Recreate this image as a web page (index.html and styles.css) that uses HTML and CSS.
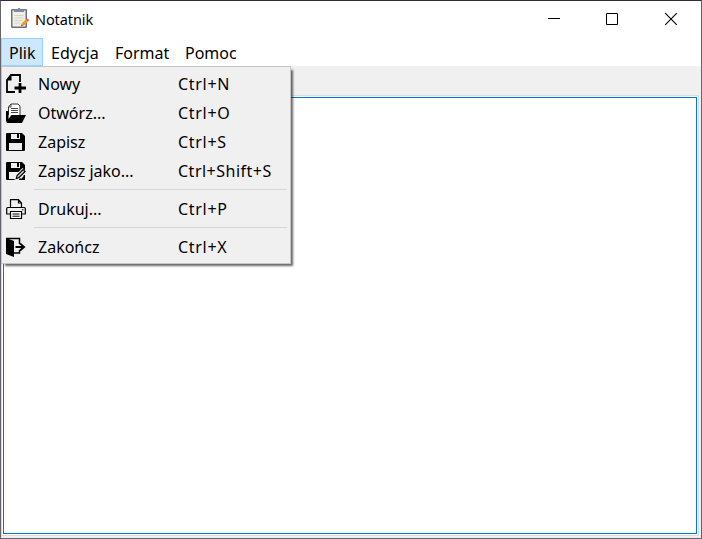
FILE: index.html
```html
<!DOCTYPE html>
<html lang="pl">
<head>
<meta charset="utf-8">
<title>Notatnik</title>
<link rel="stylesheet" href="styles.css">
</head>
<body>
<div class="window">
  <header class="titlebar">
    <svg class="app-icon" width="20" height="21" viewBox="0 0 20 21">
      <rect x="1" y="1" width="16" height="19" rx="1" fill="#66728f"/>
      <rect x="2.500" y="2.500" width="13" height="16" fill="#f4f0dd"/>
      <path d="M4 1.500h3.500L8 0h2l.5 1.500H14V4H4z" fill="#7e8bab"/>
      <path d="M4.500 7.500h9M4.500 10h9M4.500 12.500h8M4.500 15h6" stroke="#d3d3cb"/>
      <path d="M11 18l1-3 4-3.500 2 2-4 4z" fill="#f09a32"/>
      <path d="M16 11.500l1.500-1 1.800 1.800L18 13.500z" fill="#db6550"/>
      <path d="M11 18.200l.7-1.700 1 1z" fill="#5c4b38"/>
    </svg>
    <h1 class="title">Notatnik</h1>
    <div class="controls">
      <svg width="58" height="36" viewBox="0 0 58 36"><path d="M18 17.500h12" stroke="#000"/></svg>
      <svg width="58" height="36" viewBox="0 0 58 36"><path d="M18.500 12.500h11v11h-11z" fill="none" stroke="#000"/></svg>
      <svg width="58" height="36" viewBox="0 0 58 36"><path d="M19.200 12.200l11.600 11.600M30.800 12.200L19.200 23.800" stroke="#000" stroke-width="1.100"/></svg>
    </div>
  </header>
  <nav class="menubar">
    <span class="tab tab-open">Plik</span>
    <span class="tab edycja">Edycja</span>
    <span class="tab format">Format</span>
    <span class="tab pomoc">Pomoc</span>
  </nav>
  <div class="toolbar"></div>
  <main class="client"><div class="editor"></div></main>

  <div class="menu">
    <div class="item">
      <svg class="icon" width="20" height="20" viewBox="0 0 20 20"><path d="M9 18H1V6l4-5h9v7" fill="none" stroke="#000" stroke-width="1.800"/><path d="M1 6l4.500-5v5.500H1z"/><path d="M14 9v10M8.500 14H20" stroke="#000" stroke-width="2.800"/></svg>
      <span class="label">Nowy</span><span class="key">Ctrl+N</span>
    </div>
    <div class="item">
      <svg class="icon" width="20" height="20" viewBox="0 0 20 20"><path d="M2.500 12V4L5 1h7l2 2v9" fill="#fff" stroke="#333"/><path d="M5 1v3H2.500M5 5.500h7M5 7.500h7M5 9.500h7" fill="none" stroke="#444"/><path d="M0 8h2.500v8l3-4H20l-4 8H1L0 18z"/></svg>
      <span class="label">Otwórz...</span><span class="key">Ctrl+O</span>
    </div>
    <div class="item">
      <svg class="icon" width="20" height="20" viewBox="0 0 20 20"><path d="M0 2Q0 1 1 1h15l3 3v14q0 1-1 1H1q-1 0-1-1z"/><path d="M5 2h9v5H5zM3 11h13v7H3z" fill="#f0f0f0"/><path d="M11 2h2v4h-2z"/></svg>
      <span class="label">Zapisz</span><span class="key">Ctrl+S</span>
    </div>
    <div class="item">
      <svg class="icon" width="20" height="20" viewBox="0 0 20 20"><path d="M0 2Q0 1 1 1h15l3 3v14q0 1-1 1H1q-1 0-1-1z"/><path d="M5 2h9v5H5zM3 11h13v7H3z" fill="#f0f0f0"/><path d="M11 2h2v4h-2z"/><path d="M8.500 19l1-5 7-7 3.500 3.500V13l-6 6z" fill="#f0f0f0"/><path d="M10.300 17.500l.8-3 6-6 2 2-6 6z" fill="#ccc" stroke="#000" stroke-width="1.200"/><path d="M18.300 14v4.300H13" fill="none" stroke="#000" stroke-width="1.400"/></svg>
      <span class="label">Zapisz jako...</span><span class="key key-long">Ctrl+Shift+S</span>
    </div>
    <div class="separator"></div>
    <div class="item">
      <svg class="icon" width="20" height="20" viewBox="0 0 20 20"><path d="M4.500 9V.700h8L15.500 4v5M12.500.700V4h3M4 15H.7V9.500q0-1 1-1h16.600q1 0 1 1V15H16" fill="none" stroke="#000" stroke-width="1.200"/><path d="M4.500 12.500h11v7h-11z" fill="#fff" stroke="#000" stroke-width="1.200"/><path d="M6.500 15h7M6.500 17.200h7M16 10.800h1.500" stroke="#000"/></svg>
      <span class="label">Drukuj...</span><span class="key">Ctrl+P</span>
    </div>
    <div class="separator"></div>
    <div class="item">
      <svg class="icon" width="20" height="20" viewBox="0 0 20 20"><path d="M0 1l8 3v16l-8-3z"/><path d="M0 1.500h13.500V7M8 16h5.500v-3" fill="none" stroke="#000" stroke-width="1.500"/><path d="M9.500 10H17M14 6.500l4 3.500-4 3.500" fill="none" stroke="#000" stroke-width="2"/></svg>
      <span class="label">Zakończ</span><span class="key">Ctrl+X</span>
    </div>
  </div>
</div>
</body>
</html>
```
FILE: styles.css
```css
* { box-sizing: border-box; }
body { margin: 0; font-family: "Noto Sans", "Open Sans", sans-serif; font-size: 16px; color: #000; overflow: hidden; }
.window { position: relative; display: flex; flex-direction: column; width: 702px; height: 539px; border: 1px solid #66636a; border-top-color: #35283b; background: #fff; }
.titlebar { display: flex; align-items: center; height: 37px; padding: 0 0 2px 9px; }
.app-icon { flex: none; }
.title { margin: 0 0 0 5px; font-size: 14.5px; font-weight: 400; letter-spacing: -0.1px; line-height: 20px; }
.controls { display: flex; margin-left: auto; margin-right: -3px; }
.controls svg { display: block; }
.menubar { display: flex; height: 28px; line-height: 30px; }
.tab { flex: none; height: 28px; padding-left: 8px; white-space: nowrap; }
.tab-open { width: 42px; padding-left: 7px; line-height: 28px; background: #cce8ff; border: 1px solid #99d1ff; }
.edycja { width: 64px; }
.format { width: 70px; }
.toolbar { height: 29px; background: #f0f0f0; }
.client { display: flex; flex: 1; padding: 2px 4px 4px 2px; background: #f0f0f0; }
.editor { flex: 1; background: #fff; border: 1px solid #0078d7; outline: 1px solid #fff; box-shadow: 0 0 0 2px #dcdcdc; }
.menu { position: absolute; left: 0; top: 65px; width: 290px; height: 198px; padding: 3px 1px; background: #f0f0f0; border: 1px solid #c5c5c5; box-shadow: 3px 3px 2px -1px rgba(0,0,0,.6); }
.item { display: flex; align-items: center; height: 29px; padding-left: 3px; line-height: 29px; white-space: nowrap; }
.icon { flex: none; margin-top: -1px; }
.label { width: 140px; margin-left: 12px; }
.key { letter-spacing: 0.7px; }
.key-long { letter-spacing: 0.5px; }
.separator { height: 9px; margin: 0 2px 0 31px; border-top: 3px solid #f0f0f0; background: linear-gradient(#d7d7d7 1px, transparent 1px); }
```
